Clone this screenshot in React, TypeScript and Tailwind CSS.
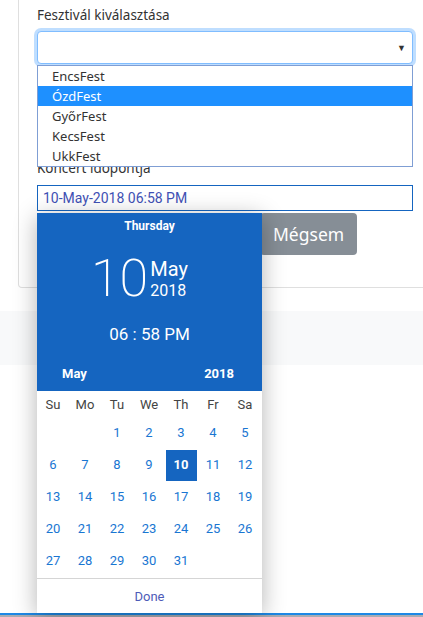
import React from "react";

const festivals = ["EncsFest", "ÓzdFest", "GyőrFest", "KecsFest", "UkkFest"];
const dayNames = ["Su", "Mo", "Tu", "We", "Th", "Fr", "Sa"];
const weeks: (number | null)[][] = [
  [null, null, 1, 2, 3, 4, 5],
  [6, 7, 8, 9, 10, 11, 12],
  [13, 14, 15, 16, 17, 18, 19],
  [20, 21, 22, 23, 24, 25, 26],
  [27, 28, 29, 30, 31, null, null],
];

function Picker() {
  return (
    <div className="absolute left-0 top-[28px] z-20 flex h-[400px] w-[225px] flex-col bg-white shadow-[0_4px_22px_rgba(0,0,0,0.3)] font-['Roboto',sans-serif]">
      <div className="flex h-[178px] flex-col bg-[#1565c0] text-white">
        <div className="pt-[5px] text-center text-[12px] font-bold leading-[16px]">Thursday</div>
        <div className="mt-[19px] flex items-start pl-[54px]">
          <div className="text-[52px] font-extralight leading-[52px]">10</div>
          <div className="ml-[2px] mt-[5px] flex flex-col">
            <div className="text-[20px] leading-[22px]">May</div>
            <div className="mt-[2px] text-[16px] leading-[18px]">2018</div>
          </div>
        </div>
        <div className="mt-[19px] text-center text-[17px] leading-[20px]">06 : 58 PM</div>
        <div className="mt-[22px] flex justify-between pl-[25px] pr-[28px] text-[13px] font-bold leading-[16px]">
          <span>May</span>
          <span>2018</span>
        </div>
      </div>
      <div className="grid grid-cols-[repeat(7,32px)] pt-[1px]">
        {dayNames.map((d) => (
          <div key={d} className="flex h-[25px] items-center justify-center text-[13px] text-[#444]">
            {d}
          </div>
        ))}
      </div>
      {weeks.map((w, i) => (
        <div key={i} className="grid grid-cols-[repeat(7,32px)]">
          {w.map((d, j) =>
            d === 10 ? (
              <div key={j} className="flex h-[32px] items-center justify-center">
                <div className="flex h-[31px] w-[31px] items-center justify-center bg-[#1565c0] text-[13px] font-bold text-white">
                  10
                </div>
              </div>
            ) : (
              <div key={j} className="flex h-[32px] items-center justify-center text-[13px] text-[#1976d2]">
                {d ?? ""}
              </div>
            )
          )}
        </div>
      ))}
      <div className="mt-[1px] border-t border-[#d5d5d5]" />
      <div className="flex flex-1 items-center justify-center pt-[1px] text-[13px] text-[#4e5bb8]">Done</div>
    </div>
  );
}

export default function App() {
  return (
    <div className="relative flex h-[617px] w-[423px] flex-col overflow-hidden bg-white font-['Noto_Sans',sans-serif]">
      <div className="ml-[18px] w-[420px] shrink-0 rounded-b-[4px] border border-t-0 border-[#dfdfdf] pb-[32px] pl-[18px] pt-[5px]">
        <div className="text-[13.5px] leading-[21px] text-[#333]">Fesztivál kiválasztása</div>
        <div className="relative mt-[5px] w-[376px]">
          <div className="flex h-[33px] items-center justify-end rounded-[4px] border border-[#80bdff] bg-white pr-[6px] shadow-[0_0_0_3px_rgba(0,123,255,0.25)]">
            <span className="text-[9px] leading-none text-[#333]">▼</span>
          </div>
          <div className="absolute left-0 top-[34px] z-10 flex w-[376px] flex-col border border-[#7f9ed4] bg-white">
            {festivals.map((f) => (
              <div
                key={f}
                className={
                  f === "ÓzdFest"
                    ? "h-[20px] bg-[#1e90ff] pl-[14px] text-[13px] leading-[20px] text-white"
                    : "h-[20px] pl-[14px] text-[13px] leading-[20px] text-[#333]"
                }
              >
                {f}
              </div>
            ))}
          </div>
        </div>
        <div className="mt-[94px] text-[13.5px] leading-[21px] text-[#333]">Koncert időpontja</div>
        <div className="relative mt-[6px] w-[376px]">
          <div className="flex h-[26px] items-center border border-[#1565c0] pl-[5px] font-['Roboto',sans-serif] text-[14px] text-[#3f51b5]">
            10-May-2018 06:58 PM
          </div>
          <Picker />
        </div>
        <div className="mt-[2px] flex">
          <div className="h-[42px] w-[219px] rounded-[4px] bg-[#1565c0]" />
          <div className="ml-[4px] flex h-[42px] items-center rounded-[4px] bg-[#868e96] px-[13px] text-[17.5px] text-white">
            Mégsem
          </div>
        </div>
      </div>
      <div className="mt-[23px] h-[54px] shrink-0 bg-[#f8f9fa]" />
      <div className="flex-1" />
      <div className="h-[2px] shrink-0 bg-[#1e88e5]" />
      <div className="h-[2px] shrink-0 bg-[#a9acb3]" />
    </div>
  );
}
